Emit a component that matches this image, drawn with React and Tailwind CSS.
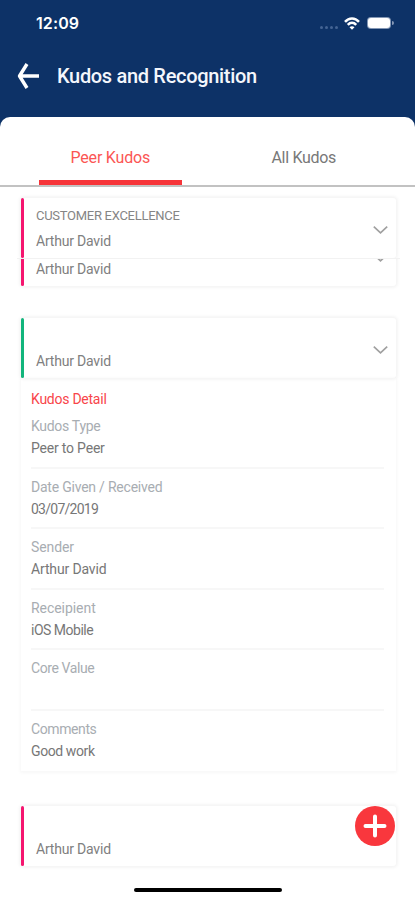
import React, { useState } from 'react';

const DETAILS = [
    { label: 'Kudos Type', value: 'Peer to Peer', labelClass: 'tracking-[-0.3px]', valueClass: 'tracking-[-0.2px]' },
    { label: 'Date Given / Received', value: '03/07/2019', labelClass: 'tracking-[-0.22px]', valueClass: 'tracking-[-0.75px]' },
    { label: 'Sender', value: 'Arthur David', labelClass: 'tracking-[-0.1px]', valueClass: 'tracking-[-0.15px]' },
    { label: 'Receipient', value: 'iOS Mobile', labelClass: 'tracking-[-0.05px]', valueClass: 'tracking-[-0.5px]' },
    { label: 'Core Value', value: '', labelClass: 'tracking-[-0.4px]', valueClass: '' },
    { label: 'Comments', value: 'Good work', labelClass: 'tracking-[-0.4px]', valueClass: 'tracking-[-0.4px]' },
];

const Chevron = () => (
    <svg className="w-4 h-4 text-[#a0a0a0]" fill="none" stroke="currentColor" viewBox="0 0 16 16">
        <path strokeWidth="1.7" d="M1.800 4.600L8.500 10.800l6.700-6.200" />
    </svg>
);

const StatusBar = () => (
    <div className="flex items-center justify-between h-[46px] pl-9 pr-[21px]">
        <span className="font-['Inter'] text-base font-semibold text-white tracking-[0.1px]">12:09</span>
        <div className="flex items-center">
            <div className="flex gap-[2px] mt-2 mr-[6px]">
                {[0, 1, 2, 3].map(dot => (
                    <span key={dot} className="w-[3px] h-[3px] rounded-full bg-[#446494]"></span>
                ))}
            </div>
            <svg className="w-4 h-[13px] mr-[7px]" viewBox="0 0 16 13" fill="none" stroke="#fff" strokeWidth="2.500">
                <path d="M1 4.800c4-4.500 10-4.500 14 0" />
                <path d="M3.800 7.800c2.400-2.700 6-2.700 8.400 0" />
                <path d="M8 12.800L5.500 10.300c1.400-1.400 3.600-1.400 5 0z" fill="#fff" stroke="none" />
            </svg>
            <div className="flex items-center">
                <div className="w-6 h-3 p-px rounded-[4px] bg-[#8397b5]">
                    <div className="w-full h-full rounded-[3px] bg-white"></div>
                </div>
                <span className="w-[2px] h-1 ml-px rounded-r-full bg-[#8397b5]"></span>
            </div>
        </div>
    </div>
);

const KudosCard = ({ title, name, accent, hideChevron }) => (
    <div className="flex w-full h-[60px] shrink-0 rounded-[3px] bg-white shadow-[0_0_3px_2px_rgba(0,0,0,0.045)]">
        <div className={`w-[3px] shrink-0 rounded-full ${accent}`}></div>
        <div className="flex-1 flex items-center justify-between pl-3 pr-2">
            <div className="h-[52px]">
                <p className="h-[25px] leading-[28px] text-[13px] text-[#858585] tracking-[-0.28px]">{title}</p>
                <p className="h-[25px] leading-[28px] text-sm text-[#808080] tracking-[-0.2px]">{name}</p>
            </div>
            {!hideChevron && <div className="mt-1"><Chevron /></div>}
        </div>
    </div>
);

const App = () => {
    const [tab, setTab] = useState('peer');

    return (
        <div className="relative w-full h-[900px] overflow-hidden bg-[#0d3267] font-['Roboto',sans-serif]">
            <StatusBar />
            <header className="flex items-center h-[71px] pl-[17px] pb-3">
                <svg className="w-[23px] h-[26px]" viewBox="0 0 23 26" fill="none" stroke="#fff" strokeWidth="3.400">
                    <path d="M10 1L2.500 13l7.500 12M2.500 13H22" strokeLinejoin="round" />
                </svg>
                <h1 className="ml-[17px] text-xl font-medium text-[#f4f7fc] tracking-[-0.32px]">Kudos and Recognition</h1>
            </header>

            <main className="h-[783px] rounded-t-[10px] bg-white">
                <div className="flex h-[70px] px-[13px] border-b-2 border-[#c2c2c2]">
                    <button onClick={() => setTab('peer')} className={`w-1/2 flex flex-col items-center text-base tracking-[-0.2px] ${tab === 'peer' ? 'text-[#fb5654]' : 'text-[#787878]'}`}>
                        <span className="h-[63px] pt-[29px] leading-6">Peer Kudos</span>
                        <span className={`w-[143px] h-[5px] ${tab === 'peer' ? 'bg-[#f63439]' : ''}`}></span>
                    </button>
                    <button onClick={() => setTab('all')} className={`w-1/2 flex flex-col items-center text-base tracking-[-0.3px] ${tab === 'all' ? 'text-[#fb5654]' : 'text-[#787878]'}`}>
                        <span className="h-[63px] pt-[29px] pr-[2px] leading-6">All Kudos</span>
                        <span className={`w-[143px] h-[5px] ${tab === 'all' ? 'bg-[#f63439]' : ''}`}></span>
                    </button>
                </div>

                <div className="pl-[21px] pr-[19px] pt-[11px]">
                    <KudosCard title="CUSTOMER EXCELLENCE" name="Arthur David" accent="bg-[#f5156f]" />
                    {/* lower part of the stacked card */}
                    <div className="flex flex-col justify-end h-[33px] pb-[5px] -mx-1 px-1 -mb-[5px] border-t border-[#f2f2f2] overflow-hidden">
                        <KudosCard title="" name="Arthur David" accent="bg-[#f5156f]" />
                    </div>

                    <section className="mt-8">
                        <KudosCard title="" name="Arthur David" accent="bg-[#12b57c]" />
                        <div className="h-[393px] pl-[10px] pr-3 pt-[11px] shadow-[0_1px_3px_1px_rgba(0,0,0,0.03)]">
                            <h2 className="h-[19px] leading-5 text-sm text-[#f8454a] tracking-[-0.25px]">Kudos Detail</h2>
                            <div className="divide-y-2 divide-[#f7f7f7]">
                                {DETAILS.map(item => (
                                    <div key={item.label} className="h-[60.5px] pt-[7px] text-sm">
                                        <p className={`h-[22px] leading-[23px] text-[#a8adb2] ${item.labelClass}`}>{item.label}</p>
                                        <p className={`h-5 leading-[22px] text-[#777] ${item.valueClass}`}>{item.value}</p>
                                    </div>
                                ))}
                            </div>
                        </div>
                    </section>

                    <section className="mt-[35px]">
                        <KudosCard title="" name="Arthur David" accent="bg-[#f5156f]" hideChevron />
                    </section>
                </div>
            </main>

            <button aria-label="Add kudos" className="absolute right-5 bottom-[54px] flex items-center justify-center w-10 h-10 rounded-full bg-[#f9373d]">
                <svg className="w-6 h-6" viewBox="0 0 24 24" stroke="#fff" strokeWidth="4" strokeLinecap="round">
                    <path d="M12 2.500v19M2.500 12h19" />
                </svg>
            </button>
            <div className="absolute left-[134px] bottom-2 w-[148px] h-1 rounded-full bg-black"></div>
        </div>
    );
};

export default App;
